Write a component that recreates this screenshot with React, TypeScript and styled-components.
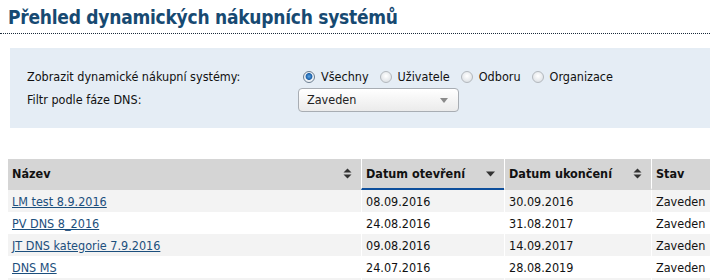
import React from 'react';
import styled, { createGlobalStyle } from 'styled-components';

const GlobalStyle = createGlobalStyle`
  body {
    margin: 0;
    background: #fff;
    font-family: "DejaVu Sans Condensed", "DejaVu Sans", sans-serif;
    font-size: 12.5px;
    color: #111;
  }
`;

type SortDir = 'both' | 'down';

const rows = [
  { name: 'LM test 8.9.2016', opened: '08.09.2016', closed: '30.09.2016', state: 'Zaveden' },
  { name: 'PV DNS 8_2016', opened: '24.08.2016', closed: '31.08.2017', state: 'Zaveden' },
  { name: 'JT DNS kategorie 7.9.2016', opened: '09.08.2016', closed: '14.09.2017', state: 'Zaveden' },
  { name: 'DNS MS', opened: '24.07.2016', closed: '28.08.2019', state: 'Zaveden' },
  { name: '', opened: '', closed: '', state: '' },
];

const scopes = ['Všechny', 'Uživatele', 'Odboru', 'Organizace'];

export default function App() {
  return (
    <Page>
      <GlobalStyle />
      <Title>Přehled dynamických nákupních systémů</Title>
      <FilterPanel>
        <FilterLabel>Zobrazit dynamické nákupní systémy:</FilterLabel>
        <RadioGroup>
          {scopes.map((s, i) => (
            <RadioOption key={s}>
              <Radio checked={i === 0} />
              {s}
            </RadioOption>
          ))}
        </RadioGroup>
        <FilterLabel>Filtr podle fáze DNS:</FilterLabel>
        <Select>
          Zaveden
          <SelectArrow />
        </Select>
      </FilterPanel>
      <Table>
        <thead>
          <tr>
            <HeadCell width={353}>
              <HeadInner>Název<SortIcon dir="both" /></HeadInner>
            </HeadCell>
            <HeadCell width={143} active>
              <HeadInner>Datum otevření<SortIcon dir="down" /></HeadInner>
            </HeadCell>
            <HeadCell width={147}>
              <HeadInner>Datum ukončení<SortIcon dir="both" /></HeadInner>
            </HeadCell>
            <HeadCell>
              <HeadInner>Stav</HeadInner>
            </HeadCell>
          </tr>
        </thead>
        <tbody>
          {rows.map((r, i) => (
            <Row key={i} odd={i % 2 === 0}>
              <Cell>{r.name && <NameLink href="#">{r.name}</NameLink>}</Cell>
              <Cell>{r.opened}</Cell>
              <Cell>{r.closed}</Cell>
              <Cell>{r.state}</Cell>
            </Row>
          ))}
        </tbody>
      </Table>
    </Page>
  );
}

function SortIcon({ dir }: { dir: SortDir }) {
  if (dir === 'down') {
    return (
      <IconBox width="9" height="6" viewBox="0 0 9 6">
        <path d="M0 0.5 L9 0.5 L4.5 5.5 Z" fill="#333" />
      </IconBox>
    );
  }
  return (
    <IconBox width="9" height="11" viewBox="0 0 9 11">
      <path d="M0.5 4.5 L8.5 4.5 L4.5 0.5 Z" fill="#333" />
      <path d="M0.5 6.5 L8.5 6.5 L4.5 10.5 Z" fill="#333" />
    </IconBox>
  );
}

const Page = styled.div`
  width: 710px;
  height: 280px;
  overflow: hidden;
`;

const Title = styled.h1`
  margin: 0;
  padding: 6px 0 5px 8px;
  font-size: 19px;
  letter-spacing: -0.25px;
  font-weight: bold;
  line-height: 22px;
  color: #174a72;
  border-bottom: 1px dotted #1a2a3a;
`;

const FilterPanel = styled.div`
  margin: 14px 0 0 10px;
  height: 80px;
  box-sizing: border-box;
  padding: 17px 0 0 17px;
  background: #e5edf5;
  display: grid;
  grid-template-columns: 271px auto;
  grid-auto-rows: 23px;
  align-items: center;
`;

const FilterLabel = styled.div`
  font-size: 12.5px;
`;

const RadioGroup = styled.div`
  display: flex;
  align-items: center;
  gap: 11px;
  padding-left: 5px;
`;

const RadioOption = styled.label`
  display: flex;
  align-items: center;
  gap: 6px;
  font-size: 12.5px;
`;

const Radio = styled.span<{ checked?: boolean }>`
  width: 12px;
  height: 12px;
  border-radius: 50%;
  box-sizing: border-box;
  border: 1px solid ${(p) => (p.checked ? '#6b7d8f' : '#b3b8bd')};
  background: ${(p) =>
    p.checked
      ? 'radial-gradient(circle at 50% 45%, #5aa7e6 0, #1b5fa8 3px, #e8eef4 3.8px, #f6f8fa 6px)'
      : 'radial-gradient(circle at 50% 40%, #fff 0, #dfe3e7 6px)'};
`;

const Select = styled.div`
  position: relative;
  width: 161px;
  height: 24px;
  box-sizing: border-box;
  padding: 0 0 0 8px;
  display: flex;
  align-items: center;
  font-size: 12.5px;
  color: #222;
  border: 1px solid #a8adb3;
  border-radius: 4px;
  background: linear-gradient(#ffffff, #ebebeb);
`;

const SelectArrow = styled.span`
  position: absolute;
  right: 10px;
  top: 9px;
  border-left: 4px solid transparent;
  border-right: 4px solid transparent;
  border-top: 5px solid #8a8a8a;
`;

const Table = styled.table`
  margin: 31px 0 0 8px;
  width: 702px;
  border-collapse: separate;
  border-spacing: 0;
  table-layout: fixed;
`;

const HeadCell = styled.th<{ width?: number; active?: boolean }>`
  width: ${(p) => (p.width ? `${p.width}px` : 'auto')};
  height: 31px;
  box-sizing: border-box;
  padding: 0 9px 0 4px;
  text-align: left;
  font-size: 12.5px;
  font-weight: bold;
  color: #111;
  background: #d5d5d5;
  border-left: 1px solid #fff;
  border-bottom: 2px solid ${(p) => (p.active ? '#0e4f9c' : '#d5d5d5')};
  &:first-child {
    border-left: none;
  }
`;

const HeadInner = styled.div`
  display: flex;
  align-items: center;
  justify-content: space-between;
`;

const IconBox = styled.svg`
  flex: none;
`;

const Row = styled.tr<{ odd?: boolean }>`
  background: ${(p) => (p.odd ? '#f3f3f3' : '#fff')};
`;

const Cell = styled.td`
  height: 22px;
  padding: 0 4px;
  font-size: 12.5px;
  white-space: nowrap;
  border-left: 1px solid #fff;
  &:first-child {
    border-left: none;
  }
`;

const NameLink = styled.a`
  color: #1c4f7d;
  text-decoration: underline;
`;
